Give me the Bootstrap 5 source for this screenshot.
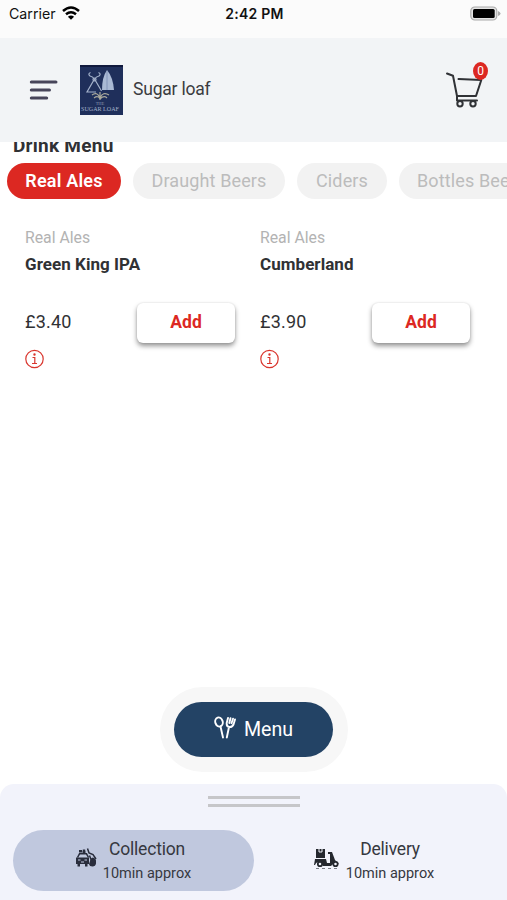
<!DOCTYPE html>
<html lang="en">
<head>
<meta charset="utf-8">
<meta name="viewport" content="width=device-width, initial-scale=1">
<title>Sugar loaf</title>
<link href="https://cdn.jsdelivr.net/npm/bootstrap@5.3.0/dist/css/bootstrap.min.css" rel="stylesheet">
<style>
body{font-family:Roboto,"Liberation Sans",sans-serif;color:#303134;background:#fff;height:900px;font-size:17.5px;line-height:20px}
svg{display:block;flex:none}
.status{height:38px;background:#fbfbfb;font-family:Inter,sans-serif;color:#111;font-size:14.2px;padding:4px 6px 0 9px}
.status-side{flex:1 1 0}
.status-time{font-weight:600;font-size:14px;letter-spacing:.25px;margin-left:-1px}
.wifi{margin:-2px 0 0 6px}
.battery{margin-top:-2px}
.topbar{height:104px;background:#f2f4f6;padding:0 17px 0 29px}
.shop-logo{margin-left:22px}
.brand-name{margin:-2px 0 0 10px;font-size:17.5px;letter-spacing:-.2px;color:#3b3c40}
.cart-count{position:absolute;left:28px;top:0;width:15px;height:18px;border-radius:50%;background:#dc2822;color:#fff;font-size:12px;line-height:18px;text-align:center}
.menu-title{height:21px;padding-left:13px}
.menu-title h1{font-size:19px;font-weight:700;line-height:22px;margin:-7px 0 0;letter-spacing:.25px}
.tabs{gap:12px;padding-left:7px}
.tab{height:36px;border-radius:18px;padding:0 18px;line-height:34px;font-size:18px;background:#f2f2f2;color:#bcbcbc;flex:none;border:0;white-space:nowrap;letter-spacing:.13px}
.tab.on{width:114px;background:#dc2822;color:#fff;font-weight:600;letter-spacing:.2px}
.tab.w-draught{width:152px}
.tab.w-ciders{width:90px}
.products{padding:29px 12px 0 25px}
.product{width:235px}
.kind{font-size:15.800px;color:#b3b3b3;letter-spacing:0}
.title{font-size:17px;font-weight:700;margin-top:6px;letter-spacing:.05px}
.buy{margin-top:29px;height:40px;padding-right:25px}
.price{font-size:18px;letter-spacing:.2px;margin-top:-2px}
.add{width:98px;height:40px;border:0;border-radius:6px;background:#fff;color:#dc2822;font-size:17.5px;font-weight:700;padding:0 0 2px;box-shadow:0 3px 5px rgba(0,0,0,.42),0 0 2px rgba(0,0,0,.12)}
.info{margin-top:6px}
.halo{width:188px;height:85px;border-radius:43px;background:#f7f7f7;margin:0 0 12px 160px;padding:15px 15px 15px 14px}
.menu-btn{border:0;border-radius:28px;background:#234365;color:#fff;font-size:19.6px;padding:1px 0 0}
.cutlery{margin-top:-6px}
.sheet{height:116px;background:#f2f3fb;border-radius:14px 14px 0 0}
.handle{width:92px;height:11px;margin:12px 0 23px 208px;border:solid #c6c6c9;border-width:3px 0}
.modes{padding-left:13px}
.mode{width:241px;height:61px;border:0;border-radius:31px;background:none;color:#36383f;padding:3px 1px 0 0}
.mode.on{background:#c0c8de}
.mode-name{font-size:17.5px;line-height:24px;letter-spacing:-.2px;margin-top:-1px}
.mode-time{font-size:14.5px;line-height:24px;margin-top:1px}
.car{margin:-8px 6px 0 0}
.scooter{margin:-7px 6px 0 0}
</style>
</head>
<body class="d-flex flex-column overflow-hidden">
<div class="status d-flex align-items-start">
  <div class="status-side d-flex align-items-center">Carrier
    <svg class="wifi" width="18" height="14" viewBox="0 0 18 14" fill="none" stroke="#000" stroke-width="2.5"><path d="M1 5Q9-2 17 5M4 8.3q5-4.2 10 0"/><path d="M9 13.800 5.900 10.700Q9 8.400 12.100 10.700Z" fill="#000" stroke="none"/></svg>
  </div>
  <div class="status-time">2:42 PM</div>
  <div class="status-side d-flex justify-content-end pt-1"><svg class="battery" width="31" height="16" viewBox="0 0 31 16"><rect x=".8" y="1" width="26" height="13" rx="4" fill="#e4e4e4" stroke="#aaa" stroke-width="1.2"/><rect x="3" y="3" width="21.7" height="9" rx="1.5"/><path d="M28 5v5q2.5-1 2.500-2.500T28 5" fill="#aaa"/></svg></div>
</div>
<header class="topbar d-flex align-items-center">
  <svg width="29" height="20" viewBox="0 0 29 20" stroke="#47455a" stroke-width="3.2" stroke-linecap="round"><path d="M2.400 2h24.500M2.400 10h18M2.400 18h15.200"/></svg>
  <svg class="shop-logo" width="43" height="50" viewBox="0 0 43 50" fill="none"><path fill="#1f2f5b" d="M0 0h43v50H0z"/><path d="M0 1h43" stroke="#10193d" stroke-width="2"/><g stroke="#a4b2cb" stroke-width="1.200"><path d="M10.500 7.500q-3 1.500-.5 3.500 3 .5 4.500 3.500 1.500-3 4.500-3.500 2.500-2-.5-3.500M14.500 14 7 27h9M14.500 14l7 12"/><circle cx="14.500" cy="14.500" r="1.500"/></g><path fill="#a9b9d4" d="M27 5q-5 7-5 20h12Q33 12 27 5"/><path d="M27 6v19" stroke="#8294b9"/><path stroke="#aaa99c" stroke-width="1.200" d="M12 30q5-4 8 3 3-7 9-3M14 33q4-3 6 1 4-4 7-1M20 27v8"/><text x="20" y="39.500" fill="#8895af" font-family="Liberation Serif,serif" font-size="4.500" text-anchor="middle">THE</text><text x="1" y="45.500" fill="#a4b1ca" font-family="Liberation Serif,serif" font-size="6.500" textLength="38" lengthAdjust="spacingAndGlyphs">SUGAR LOAF</text></svg>
  <div class="brand-name">Sugar loaf</div>
  <div class="position-relative ms-auto">
    <svg width="45" height="56" viewBox="0 0 45 56" fill="none" stroke="#303236" stroke-width="2" stroke-linecap="round" stroke-linejoin="round"><path d="m2 11.500 6 2.300L12 34h19l5.300-16-22.800-1M12 34v4.500h20"/><circle cx="15" cy="41.800" r="2.700"/><circle cx="28" cy="41.800" r="2.700"/></svg>
    <span class="cart-count">0</span>
  </div>
</header>
<main class="flex-grow-1 d-flex flex-column">
  <div class="menu-title overflow-hidden"><h1>Drink Menu</h1></div>
  <nav class="tabs d-flex overflow-hidden" aria-label="Drinks">
    <button class="tab on">Real Ales</button><button class="tab w-draught">Draught Beers</button><button class="tab w-ciders">Ciders</button><button class="tab">Bottles Beers</button>
  </nav>
  <section class="products d-flex">
    <article class="product">
      <div class="kind">Real Ales</div><div class="title">Green King IPA</div>
      <div class="buy d-flex align-items-center justify-content-between"><span class="price">£3.40</span><button class="add">Add</button></div>
      <svg class="info" width="19" height="20" viewBox="0 0 19 20" fill="none" stroke="#d9352d" stroke-width="1.200"><circle cx="9.500" cy="10" r="8.700"/><path d="M7.500 8.500h2.300v6M7 14.500h5"/><circle cx="9.500" cy="5.500" r=".6" fill="#d9352d"/></svg>
    </article>
    <article class="product">
      <div class="kind">Real Ales</div><div class="title">Cumberland</div>
      <div class="buy d-flex align-items-center justify-content-between"><span class="price">£3.90</span><button class="add">Add</button></div>
      <svg class="info" width="19" height="20" viewBox="0 0 19 20" fill="none" stroke="#d9352d" stroke-width="1.200"><circle cx="9.500" cy="10" r="8.700"/><path d="M7.500 8.500h2.300v6M7 14.500h5"/><circle cx="9.500" cy="5.500" r=".6" fill="#d9352d"/></svg>
    </article>
  </section>
  <div class="halo d-flex mt-auto">
    <button class="menu-btn w-100 d-flex align-items-center justify-content-center gap-2">
      <svg class="cutlery" width="22" height="23" viewBox="0 0 22 23" fill="none" stroke="#fff" stroke-width="1.900" stroke-linecap="round" stroke-linejoin="round"><ellipse cx="5" cy="6" rx="3.700" ry="4.600" transform="rotate(-18 5 6)"/><path d="M6.500 10.500 9 21.500M15 11l-2.200 10.500M14 2l-1.300 5q-.3 3.500 2.500 4 3 .3 4.300-2.500l1.500-5M16.500 2.200 15.300 7M19 2.700l-1.500 4.500"/></svg>
      <span>Menu</span>
    </button>
  </div>
</main>
<footer class="sheet overflow-hidden">
  <div class="handle"></div>
  <div class="modes d-flex">
    <button class="mode on d-flex align-items-center justify-content-center">
      <svg class="car" width="22" height="20" viewBox="0 0 22 20" fill="none" stroke="#292d3c"><path d="M2.500 9.500 4.500 5.800h7l2 3.700" stroke-width="1.500"/><path d="M1 9.500h13v6.500h-1.500v2.500H10V16H5v2.500H2.500V16H1z" fill="#292d3c" stroke="none"/><path d="M3 12h2.500m4 0H12M6 14h3" stroke="#c0c8de"/><path d="M4 3.200h3M9 5V1.500M7.500 4h3" stroke-width="2.400"/><path d="M12.500.5 14 5l4 1.500 3 4.500M14.500 7.500l1.500 4" stroke-width="1.500"/><path d="M15 13q0-3 3-3.500 3 1 3 3v3q-.5 3-3.500 3T14 16z" fill="#292d3c" stroke="none"/></svg>
      <span><span class="mode-name d-block">Collection</span><span class="mode-time d-block">10min approx</span></span>
    </button>
    <button class="mode d-flex align-items-center justify-content-center">
      <svg class="scooter" width="26" height="22" viewBox="0 0 26 22" fill="#25282e"><path d="M2 1h9v9H2zM1 11h11l1 4h3V6h-2V4h4l3 8 4 4-5-1-3 3h-8q-1-4-4-4t-4 3H0z"/><path d="M5 1v3h3V1M2 10.500h9" stroke="#f2f3fb" fill="none"/><g fill="#f2f3fb" stroke="#25282e" stroke-width="1.800"><circle cx="6" cy="16" r="2.200"/><circle cx="21.500" cy="16" r="2.200"/></g><path d="M2 20.500h22" stroke="#7b7e87" stroke-dasharray="3 3"/></svg>
      <span><span class="mode-name d-block">Delivery</span><span class="mode-time d-block">10min approx</span></span>
    </button>
  </div>
</footer>
<script src="https://cdn.jsdelivr.net/npm/bootstrap@5.3.0/dist/js/bootstrap.bundle.min.js"></script>
</body>
</html>
